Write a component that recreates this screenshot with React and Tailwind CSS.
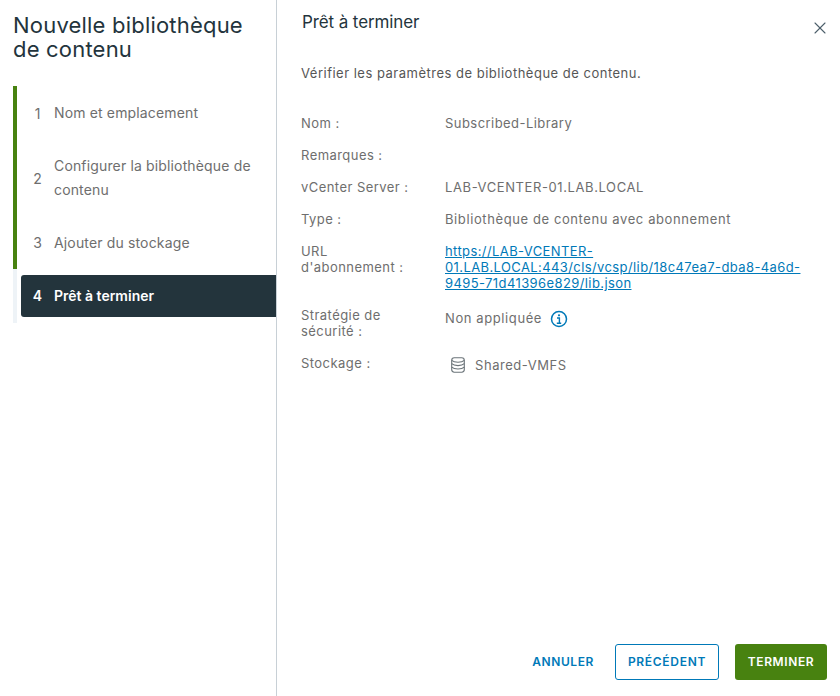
import React from 'react';
import { X } from 'lucide-react';

const font = "font-['Inter','Liberation_Sans',sans-serif]";

function Step({ num, height, children }) {
  return (
    <div className={`flex items-center pl-1 text-[#6e6e6e] ${height}`}>
      <span className="w-[33px] shrink-0 text-center text-[14px]">{num}</span>
      <span className="text-[14px] leading-6 tracking-[0.15px]">{children}</span>
    </div>
  );
}

function Label({ children }) {
  return <div className="text-[13px] leading-4 tracking-[0.45px] text-[#6e6e6e]">{children}</div>;
}

function StorageIcon() {
  return (
    <svg width="16" height="16" viewBox="0 0 16 16" fill="none" stroke="#6b7479" strokeWidth="1.100">
      <rect x="1.700" y="0.800" width="12.600" height="14.400" rx="2.600" />
      <path d="M1.700 3.300c1.400 1.400 3.600 1.900 6.300 1.900s4.900-.5 6.300-1.900" />
      <path d="M1.700 6.700c1.400 1.400 3.600 1.900 6.300 1.900s4.900-.5 6.300-1.900" />
      <path d="M1.700 10.100c1.400 1.400 3.600 1.900 6.300 1.900s4.900-.5 6.300-1.900" />
    </svg>
  );
}

function InfoIcon() {
  return (
    <svg width="18" height="18" viewBox="0 0 18 18" fill="none">
      <circle cx="9" cy="9" r="7.500" stroke="#0079b8" strokeWidth="1.500" />
      <circle cx="9" cy="5.300" r="1.100" fill="#0079b8" />
      <path d="M7 8h2.400v5M6.800 13.200h4.400" stroke="#0079b8" strokeWidth="1.400" />
    </svg>
  );
}

export default function App() {
  return (
    <div className={`flex h-[696px] w-[840px] overflow-hidden bg-white ${font}`}>
      {/* Sidebar */}
      <div className="w-[277px] shrink-0 border-r border-[#c8d0d6] pl-[13px]">
        <h1 className="pt-[13px] text-[22px] leading-6 font-normal tracking-[0.2px] text-[#23343c]">
          Nouvelle bibliothèque
          <br />
          de contenu
        </h1>
        <div className="mt-[25px]">
          <div className="border-l-4 border-[#488210]">
            <Step num="1" height="h-[54px]">Nom et emplacement</Step>
            <Step num="2" height="h-[76px]">
              Configurer la bibliothèque de
              <br />
              contenu
            </Step>
            <Step num="3" height="h-[53px]">Ajouter du stockage</Step>
          </div>
          <div className="border-l-4 border-[#eef3f7] py-1.5">
            <div className="ml-1 flex h-[42px] items-center rounded-l-[3px] bg-[#23343c] pb-px font-semibold text-white">
              <span className="w-[33px] shrink-0 text-center text-[14px]">4</span>
              <span className="text-[14px]">Prêt à terminer</span>
            </div>
          </div>
        </div>
      </div>

      {/* Main */}
      <div className="flex min-w-0 flex-1 flex-col">
        <div className="flex items-start justify-between pt-[10px] pr-[10px] pl-[25px]">
          <h2 className="text-[17px] leading-6 font-normal tracking-[-0.1px] text-[#23343c]">Prêt à terminer</h2>
          <X size={20} strokeWidth={1.3} className="mt-2 text-[#4d5f6b]" />
        </div>

        <p className="mt-[27px] pl-[24px] text-[13px] leading-4 tracking-[0.5px] text-[#565656]">
          Vérifier les paramètres de bibliothèque de contenu.
        </p>

        <div className="mt-[34px] grid grid-cols-[144px_370px] gap-y-4 pl-[24px]">
          <Label>Nom :</Label>
          <Label>Subscribed-Library</Label>

          <Label>Remarques :</Label>
          <Label />

          <Label>vCenter Server :</Label>
          <div className="text-[13px] leading-4 tracking-[0.6px] text-[#6e6e6e]">LAB-VCENTER-01.LAB.LOCAL</div>

          <Label>Type :</Label>
          <div className="text-[13px] leading-4 tracking-[0.6px] text-[#6e6e6e]">Bibliothèque de contenu avec abonnement</div>

          <Label>
            URL
            <br />
            d'abonnement :
          </Label>
          <div className="text-[13px] leading-4 tracking-[0.4px] text-[#0079b8] underline">
            https://LAB-VCENTER-
            <br />
            01.LAB.LOCAL:443/cls/vcsp/lib/18c47ea7-dba8-4a6d-
            <br />
            9495-71d41396e829/lib.json
          </div>

          <Label>
            Stratégie de
            <br />
            sécurité :
          </Label>
          <div className="mt-1 flex h-4 items-center gap-2 text-[13px] tracking-[0.6px] text-[#6e6e6e]">
            <span>Non appliquée</span>
            <InfoIcon />
          </div>

          <Label>Stockage :</Label>
          <div className="flex items-center gap-[9px] pt-0.5 pl-[5px] text-[13px] leading-4 tracking-[0.55px] text-[#6e6e6e]">
            <StorageIcon />
            <span>Shared-VMFS</span>
          </div>
        </div>

        {/* Footer */}
        <div className="mt-auto mb-[16px] flex items-center justify-end gap-4 pr-[13px]">
          <button className="h-9 text-[12px] font-semibold tracking-[0.6px] text-[#0079b8]">ANNULER</button>
          <button className="ml-[5px] h-9 w-[104px] rounded-[3px] border border-[#0079b8] text-[12px] font-semibold tracking-[0.7px] text-[#0079b8]">
            PRÉCÉDENT
          </button>
          <button className="h-9 w-[92px] rounded-[3px] bg-[#488210] text-[12px] font-semibold tracking-[0.6px] text-white">
            TERMINER
          </button>
        </div>
      </div>
    </div>
  );
}
